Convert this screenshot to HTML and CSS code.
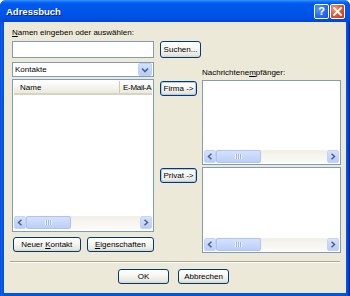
FILE: index.html
```html
<!DOCTYPE html>
<html lang="de">
<head>
<meta charset="utf-8">
<title>Adressbuch</title>
<link rel="stylesheet" href="styles.css">
</head>
<body>
<div class="window">
  <div class="titlebar">
    <span class="title">Adressbuch</span>
    <div class="tb-buttons">
      <span class="tb-btn help">?</span>
      <span class="tb-btn close">
        <svg width="9" height="9" viewBox="0 0 9 9"><path d="M1 1 L8 8 M8 1 L1 8" stroke="#fff" stroke-width="1.8" stroke-linecap="square"/></svg>
      </span>
    </div>
  </div>
  <div class="client">
    <div class="label"><u>N</u>amen eingeben oder auswählen:</div>
    <div class="search-row">
      <div class="textbox"></div>
      <button class="btn search">Suchen...</button>
    </div>
    <div class="main">
      <div class="left">
        <div class="combo">
          <span class="combo-text">Kontakte</span>
          <span class="combo-arrow"><svg width="8" height="6" viewBox="0 0 8 6"><path d="M1 1.5 L4 4.5 L7 1.5" fill="none" stroke="#4D6185" stroke-width="1.6"/></svg></span>
        </div>
        <div class="listview">
          <div class="lv-header">
            <div class="col col-name">Name</div>
            <div class="col col-mail">E-Mail-A</div>
          </div>
          <div class="lv-body"></div>
          <div class="hscroll">
            <span class="sb-arrow"><svg width="6" height="7" viewBox="0 0 6 7"><path d="M4.5 0.8 L1.5 3.5 L4.5 6.2" fill="none" stroke="#4D6185" stroke-width="1.5"/></svg></span>
            <span class="sb-track"><span class="sb-thumb"><span class="grip"></span></span></span>
            <span class="sb-arrow"><svg width="6" height="7" viewBox="0 0 6 7"><path d="M1.5 0.8 L4.5 3.5 L1.5 6.2" fill="none" stroke="#4D6185" stroke-width="1.5"/></svg></span>
          </div>
        </div>
        <div class="left-buttons">
          <button class="btn wide">Neuer <u>K</u>ontakt</button>
          <button class="btn wide"><u>E</u>igenschaften</button>
        </div>
      </div>
      <div class="middle">
        <button class="btn move firma">Firma -&gt;</button>
        <button class="btn move privat">Privat -&gt;</button>
      </div>
      <div class="right">
        <div class="label">Nachrichtene<u>m</u>pfänger:</div>
        <div class="rbox rbox1">
          <div class="hscroll">
            <span class="sb-arrow"><svg width="6" height="7" viewBox="0 0 6 7"><path d="M4.5 0.8 L1.5 3.5 L4.5 6.2" fill="none" stroke="#4D6185" stroke-width="1.5"/></svg></span>
            <span class="sb-track"><span class="sb-thumb"><span class="grip"></span></span></span>
            <span class="sb-arrow"><svg width="6" height="7" viewBox="0 0 6 7"><path d="M1.5 0.8 L4.5 3.5 L1.5 6.2" fill="none" stroke="#4D6185" stroke-width="1.5"/></svg></span>
          </div>
        </div>
        <div class="rbox rbox2">
          <div class="hscroll">
            <span class="sb-arrow"><svg width="6" height="7" viewBox="0 0 6 7"><path d="M4.5 0.8 L1.5 3.5 L4.5 6.2" fill="none" stroke="#4D6185" stroke-width="1.5"/></svg></span>
            <span class="sb-track"><span class="sb-thumb"><span class="grip"></span></span></span>
            <span class="sb-arrow"><svg width="6" height="7" viewBox="0 0 6 7"><path d="M1.5 0.8 L4.5 3.5 L1.5 6.2" fill="none" stroke="#4D6185" stroke-width="1.5"/></svg></span>
          </div>
        </div>
      </div>
    </div>
    <div class="separator"></div>
    <div class="footer">
      <button class="btn foot">OK</button>
      <button class="btn foot">Abbrechen</button>
    </div>
  </div>
</div>
</body>
</html>
```

FILE: styles.css
```css
* { box-sizing: border-box; }
html, body { margin: 0; padding: 0; }
body {
  width: 350px;
  height: 296px;
  overflow: hidden;
  background: #ffffff;
  font-family: "Liberation Sans", Arial, sans-serif;
  font-size: 8px;
  color: #000;
}
u { text-decoration: underline; text-underline-offset: 1px; }

.window {
  width: 350px;
  height: 296px;
  display: flex;
  flex-direction: column;
  background: linear-gradient(to right, #0831D9 0, #166AEE 1px, #0055E5 2px, #0055E5 347px, #0842C8 348px, #001EA0 350px);
  border-radius: 6px 6px 0 0;
  overflow: hidden;
}

.titlebar {
  height: 22px;
  flex: none;
  display: flex;
  align-items: center;
  justify-content: space-between;
  padding: 0 5px 0 6px;
  background: linear-gradient(to bottom, #3D95FF 0, #0A6BF4 2px, #0058EE 4px, #0055EA 12px, #0050E2 18px, #0046D4 22px);
}
.title {
  color: #fff;
  font-weight: bold;
  font-size: 9.5px;
  text-shadow: 1px 1px 0 #0A1E8A;
  padding-top: 1px;
}
.tb-buttons { display: flex; gap: 1px; padding-top: 1px; }
.tb-btn {
  width: 15px;
  height: 15px;
  border: 1px solid #fff;
  border-radius: 2px;
  display: flex;
  align-items: center;
  justify-content: center;
}
.help {
  background: radial-gradient(circle at 30% 30%, #5C9BFF 0, #2F6EEA 50%, #1C4FD0 100%);
  color: #fff;
  font-weight: bold;
  font-size: 11px;
  line-height: 13px;
}
.close {
  background: radial-gradient(circle at 30% 30%, #F39A7B 0, #E0582F 50%, #C23A15 100%);
}

.client {
  flex: 1;
  margin: 0 4px 3px 4px;
  background: #ECE9D8;
  padding: 6px 0 0 8px;
  display: flex;
  flex-direction: column;
}
.label { height: 10px; line-height: 10px; white-space: nowrap; }

.search-row { display: flex; gap: 6px; margin-top: 3px; height: 17px; }
.textbox {
  width: 142px;
  height: 17px;
  border: 1px solid #7F9DB9;
  background: #fff;
}

.btn {
  font-family: inherit;
  font-size: 8px;
  color: #000;
  padding: 0;
  border: 1px solid #003C74;
  border-radius: 3px;
  background: linear-gradient(to bottom, #FFFFFF 0, #F4F4F0 50%, #E8E6DD 85%, #D8D3C6 100%);
  line-height: 1;
  white-space: nowrap;
}
.search { width: 41px; height: 17px; }

.main {
  margin-top: 4px;
  height: 191px;
  display: grid;
  grid-template-columns: 142px 48px 139px;
}

.left { display: flex; flex-direction: column; }
.combo {
  height: 15px;
  border: 1px solid #7F9DB9;
  background: #fff;
  display: flex;
  align-items: center;
  justify-content: space-between;
  padding: 0 1px 0 2px;
}
.combo-arrow {
  width: 14px;
  height: 13px;
  border-radius: 2px;
  background: linear-gradient(to bottom, #D3E0FD, #B9CCF7);
  border: 1px solid #BED0F8;
  display: flex;
  align-items: center;
  justify-content: center;
}
.listview {
  margin-top: 2px;
  height: 153px;
  border: 1px solid #7F9DB9;
  background: #fff;
  padding: 1px 1px 2px 1px;
  display: flex;
  flex-direction: column;
}
.lv-header {
  height: 14px;
  display: flex;
  background: linear-gradient(to bottom, #FFFFFF 0, #F3F2EB 60%, #EBEADB 100%);
  border-bottom: 2px solid #D8D4C4;
}
.col { display: flex; align-items: center; white-space: nowrap; }
.col-name { width: 106px; padding-left: 6px; border-right: 1px solid #CBC7B8; }
.col-mail { flex: 1; padding-left: 3px; letter-spacing: -0.3px; }
.lv-body { flex: 1; }

.hscroll { height: 13px; display: flex; flex: none; }
.sb-arrow {
  width: 12px;
  height: 13px;
  border-radius: 2px;
  background: linear-gradient(to bottom, #D6E2FE, #BACCF7);
  border: 1px solid #C4D3F7;
  display: flex;
  align-items: center;
  justify-content: center;
}
.sb-track {
  flex: 1;
  background: linear-gradient(to bottom, #F1EFE6, #FBFBF8);
  display: flex;
}
.sb-thumb {
  width: 45px;
  height: 13px;
  border-radius: 2px;
  background: linear-gradient(to bottom, #D5E2FE, #BCCEF8);
  border: 1px solid #AFC3F0;
  display: flex;
  align-items: center;
  justify-content: center;
}
.grip {
  width: 7px;
  height: 5px;
  background: repeating-linear-gradient(to right, #EEF3FF 0, #EEF3FF 1px, #9DB3E8 1px, #9DB3E8 2px);
}

.left-buttons { display: flex; gap: 6px; margin-top: 5px; padding-left: 1px; }
.wide { width: 68px; height: 15px; }

.middle { display: flex; flex-direction: column; padding-left: 6px; }
.move {
  width: 37px;
  height: 15px;
  box-shadow: inset 0 0 0 1px #B4C8F2;
}
.firma { margin-top: 19px; }
.privat { margin-top: 72px; }

.right { display: flex; flex-direction: column; padding-top: 6px; }
.rbox {
  margin-top: 2px;
  border: 1px solid #7F9DB9;
  background: #fff;
  padding: 1px 1px 1px 1px;
  display: flex;
  flex-direction: column;
  justify-content: flex-end;
}
.rbox1 { height: 85px; }
.rbox2 { height: 86px; }

.separator {
  margin: 8px 6px 0 -2px;
  height: 2px;
  border-top: 1px solid #ACA899;
  border-bottom: 1px solid #FFFFFF;
}
.footer {
  display: flex;
  justify-content: center;
  gap: 9px;
  margin: 6px 0 0 -8px;
  padding-right: 3px;
}
.foot { width: 51px; height: 15px; }
```
